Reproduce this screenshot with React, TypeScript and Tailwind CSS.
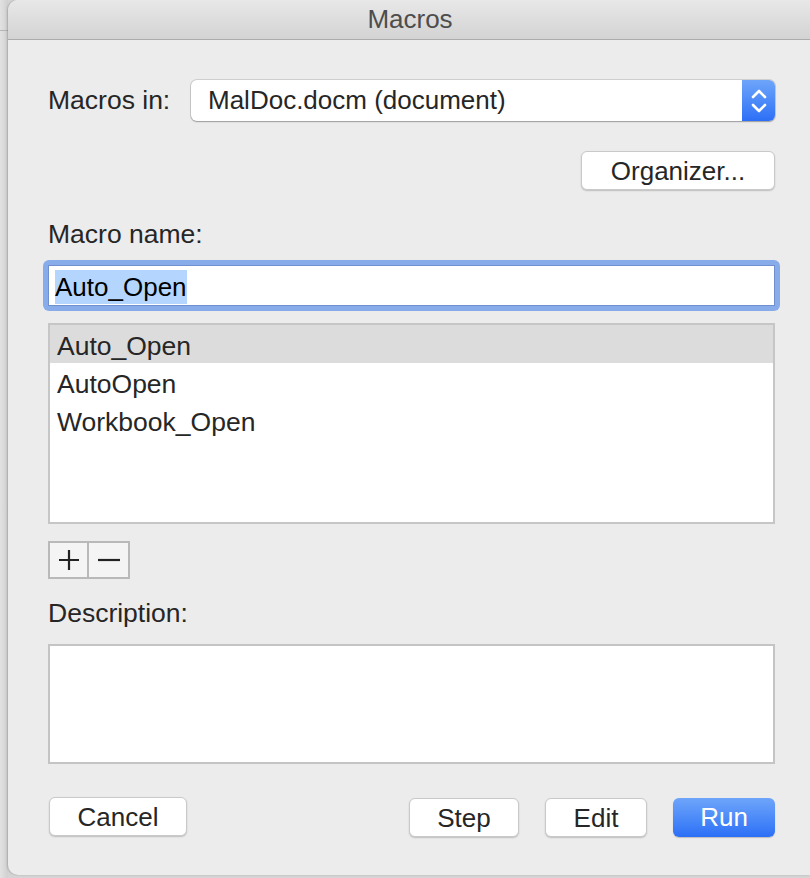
import React from 'react';

const font = { fontFamily: '"Liberation Sans", Arial, sans-serif' };

function Button({ label, width, primary }: { label: string; width: string; primary?: boolean }) {
  return (
    <button
      className={
        primary
          ? `${width} h-[39px] rounded-[6px] bg-gradient-to-b from-[#6ea5fa] to-[#2c6ff6] text-white text-[26px] shadow-[0_1px_1px_rgba(0,0,0,0.2)]`
          : `${width} h-[39px] rounded-[6px] bg-white border border-[#c9c9c9] text-[#262626] text-[26px] shadow-[0_1px_1.5px_rgba(0,0,0,0.2)]`
      }
    >
      {label}
    </button>
  );
}

export default function App() {
  const macros = ['Auto_Open', 'AutoOpen', 'Workbook_Open'];

  return (
    <div className="w-[810px] h-[878px] flex bg-[#d4d4d4] overflow-hidden" style={font}>
      {/* sliver of the window behind */}
      <div className="w-[8px] shrink-0 flex flex-col bg-gradient-to-r from-[#e2e2e2] to-[#d0d0d0]">
        <div className="h-[31px] border-b border-[#b5b5b5]" />
      </div>

      <div className="flex-1 h-[875px] flex flex-col bg-[#ececec] rounded-tl-[10px] rounded-bl-[10px] overflow-hidden shadow-[-1px_0_2px_rgba(0,0,0,0.2)]">
        <div className="h-[40px] shrink-0 flex items-center justify-center bg-gradient-to-b from-[#e8e8e8] to-[#d3d3d3] border-b border-[#acacac] pl-[2px]">
          <span className="text-[26px] text-[#4d4d4d]">Macros</span>
        </div>

        <div className="flex flex-col pl-[40px] pr-[35px] pt-[40px] text-[26.5px]">
          <div className="flex items-center h-[41px]">
            <span className="w-[143px] text-[#262626]">Macros in:</span>
            <div className="flex-1 h-[41px] flex rounded-[6px] bg-white shadow-[0_0_0_1px_rgba(0,0,0,0.12),0_1px_1.5px_rgba(0,0,0,0.25)] overflow-hidden">
              <span className="flex-1 pl-[17px] text-[26px] text-[#262626] leading-[41px]">MalDoc.docm (document)</span>
              <div className="w-[33px] flex items-center justify-center bg-gradient-to-b from-[#6ea5fa] to-[#2c6ff6]">
                <svg width="18" height="28" viewBox="0 0 18 28" fill="none" stroke="white" strokeWidth="2.6" strokeLinecap="round" strokeLinejoin="round">
                  <path d="M3 10 L9 4 L15 10" />
                  <path d="M3 18 L9 24 L15 18" />
                </svg>
              </div>
            </div>
          </div>

          <div className="flex justify-end mt-[30px]">
            <Button label="Organizer..." width="w-[194px]" />
          </div>

          <div className="mt-[29px] h-[30px] leading-[30px] text-[#262626]">Macro name:</div>

          <div className="mt-[11px] -mx-[5px] h-[51px] rounded-[6px] bg-[#88abea] p-[5px]">
            <div className="h-full bg-white border border-[#6f8fcf] flex items-center pl-[6px] pt-[2px]">
              <span className="bg-[#b4d6fe] text-[26px] text-black leading-[34px]">Auto_Open</span>
            </div>
          </div>

          <div className="mt-[12px] h-[201px] bg-white border-2 border-[#c6c6c6] flex flex-col">
            {macros.map((m, i) => (
              <div
                key={m}
                className={`h-[38px] shrink-0 flex items-center pl-[7px] pt-[6px] text-[#262626] ${i === 0 ? 'bg-[#dcdcdc]' : ''}`}
              >
                {m}
              </div>
            ))}
          </div>

          <div className="mt-[17px] flex">
            <div className="flex border-2 border-[#b9b9b9] bg-[#f4f4f4]">
              <div className="w-[39px] h-[34px] flex items-center justify-center border-r-2 border-[#b9b9b9]">
                <svg width="24" height="24" viewBox="0 0 24 24" stroke="#222" strokeWidth="2.2">
                  <path d="M12 2 V22 M2 12 H22" />
                </svg>
              </div>
              <div className="w-[39px] h-[34px] flex items-center justify-center">
                <svg width="24" height="24" viewBox="0 0 24 24" stroke="#222" strokeWidth="2.2">
                  <path d="M1 12 H23" />
                </svg>
              </div>
            </div>
          </div>

          <div className="mt-[19px] h-[30px] leading-[30px] text-[#262626]">Description:</div>

          <div className="mt-[16px] h-[120px] bg-white border-2 border-[#c4c4c4]" />

          <div className="mt-[33px] flex items-center">
            <div className="ml-[1px]">
              <Button label="Cancel" width="w-[138px]" />
            </div>
            <div className="flex-1" />
            <div className="flex gap-[26px]">
              <Button label="Step" width="w-[110px]" />
              <Button label="Edit" width="w-[102px]" />
              <Button label="Run" width="w-[102px]" primary />
            </div>
          </div>
        </div>
      </div>
    </div>
  );
}
